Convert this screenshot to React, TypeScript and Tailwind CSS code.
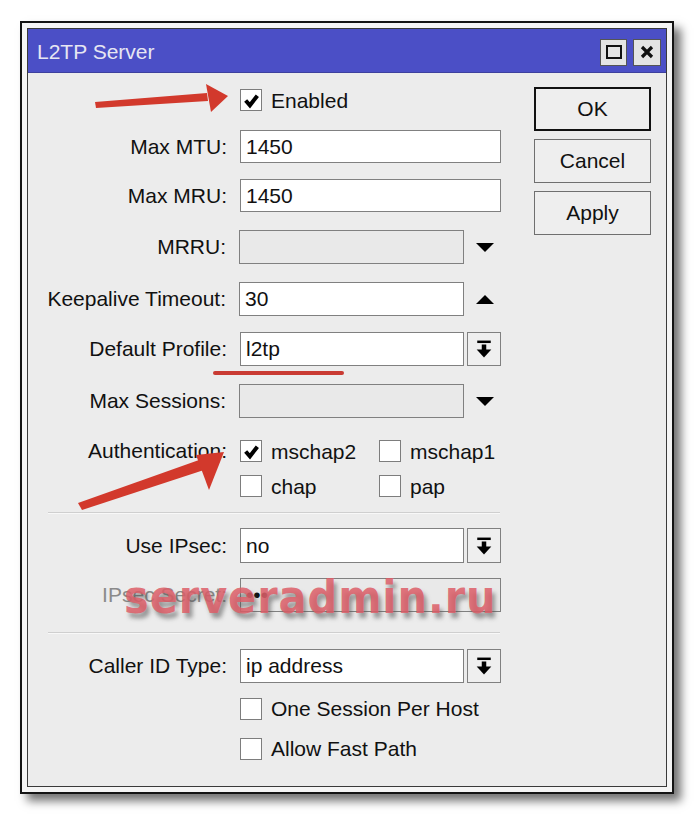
import React from "react";

const font = { fontFamily: '"Liberation Sans", Arial, sans-serif' };

const Check = ({ checked }: { checked?: boolean }) => (
  <div className="w-[22px] h-[22px] shrink-0 border border-[#7d7d7d] bg-white flex items-center justify-center">
    {checked && (
      <svg width="17" height="17" viewBox="0 0 16 16">
        <path d="M2.5 8 L6.5 12.5 L13.5 3.5" fill="none" stroke="#000" strokeWidth="3.8" />
      </svg>
    )}
  </div>
);

const DropIcon = () => (
  <svg width="16" height="18" viewBox="0 0 14 16">
    <rect x="1" y="0.5" width="12" height="2.2" fill="#000" />
    <rect x="5" y="4" width="4" height="5" fill="#000" />
    <polygon points="0.5,8.5 13.5,8.5 7,15.5" fill="#000" />
  </svg>
);

const Tri = ({ up }: { up?: boolean }) => (
  <div className="w-[37px] flex justify-end pr-[7px]">
    <svg width="18" height="9" viewBox="0 0 18 9">
      <polygon points={up ? "0,9 18,9 9,0" : "0,0 18,0 9,9"} fill="#000" />
    </svg>
  </div>
);

const Box = ({ value, w, disabled }: { value?: string; w: string; disabled?: boolean }) => (
  <div
    className={`${w} h-full border border-[#808080] flex items-center pl-[5px] text-[21px] text-[#111] ${
      disabled ? "bg-[#e9e9e9]" : "bg-white"
    }`}
  >
    {value}
  </div>
);

const Row = ({
  label,
  mt,
  h,
  dim,
  children,
}: {
  label?: string;
  mt: string;
  h: string;
  dim?: boolean;
  children: React.ReactNode;
}) => (
  <div className={`flex items-center ${mt} ${h}`}>
    <div className={`w-[200px] text-right text-[21px] pr-[1px] ${dim ? "text-[#8a8a8a]" : "text-[#111]"}`}>
      {label}
    </div>
    <div className="ml-[12px] h-full flex items-center">{children}</div>
  </div>
);

const Combo = ({ value }: { value: string }) => (
  <div className="flex h-full">
    <Box value={value} w="w-[224px]" />
    <div className="ml-[3px] w-[34px] h-full border border-[#808080] bg-[#efefef] flex items-center justify-center">
      <DropIcon />
    </div>
  </div>
);

const CheckItem = ({ checked, text, w }: { checked?: boolean; text: string; w?: string }) => (
  <div className={`flex items-center gap-[9px] ${w ?? ""}`}>
    <Check checked={checked} />
    <span className="text-[21px] text-[#111] leading-none">{text}</span>
  </div>
);

const Sep = ({ mt }: { mt: string }) => (
  <div className={`${mt} ml-[20px] w-[452px] h-[2px] border-t border-[#cfcfcf] bg-[#f8f8f8]`} />
);

const Btn = ({ text, primary, mt }: { text: string; primary?: boolean; mt?: string }) => (
  <div
    className={`w-[117px] h-[44px] flex items-center justify-center text-[21px] text-[#111] bg-[#eeeeee] ${
      primary ? "border-2 border-[#111]" : "border border-[#6f6f6f]"
    } ${mt ?? ""}`}
  >
    {text}
  </div>
);

export default function App() {
  return (
    <div className="relative w-[696px] h-[816px] bg-white overflow-hidden" style={font}>
      <div className="pt-[21px] pl-[20px]">
        {/* window */}
        <div className="w-[654px] h-[773px] border-2 border-[#141414] bg-[#f5f5f5] p-[5px] shadow-[7px_7px_9px_rgba(0,0,0,0.55)]">
          <div className="h-full border border-[#3a3a3a] bg-[#ececec] flex flex-col">
            {/* title bar */}
            <div className="h-[44px] bg-[#4b4fc6] flex items-center justify-between pl-[9px] pr-[5px] border-b border-[#3d409e]">
              <span className="text-[21px] text-[#e6e6f2] mt-[3px]">L2TP Server</span>
              <div className="flex gap-[6px] mt-[3px]">
                <div className="w-[27px] h-[27px] bg-[#e4e4e4] border border-[#555] flex items-center justify-center">
                  <div className="w-[16px] h-[14px] border-2 border-[#111]" />
                </div>
                <div className="w-[28px] h-[27px] bg-[#e4e4e4] border border-[#555] flex items-center justify-center">
                  <svg width="14" height="14" viewBox="0 0 14 14">
                    <path d="M2 2 L12 12 M12 2 L2 12" stroke="#111" strokeWidth="3.2" />
                  </svg>
                </div>
              </div>
            </div>

            {/* body */}
            <div className="flex">
              <div className="flex flex-col pt-[16px] w-[473px]">
                <Row mt="mt-0" h="h-[22px]">
                  <CheckItem checked text="Enabled" />
                </Row>
                <Row label="Max MTU:" mt="mt-[19px]" h="h-[33px]">
                  <Box value="1450" w="w-[261px]" />
                </Row>
                <Row label="Max MRU:" mt="mt-[16px]" h="h-[33px]">
                  <Box value="1450" w="w-[261px]" />
                </Row>
                <Row label="MRRU:" mt="mt-[18px]" h="h-[34px]">
                  <Box w="w-[225px]" disabled />
                  <Tri />
                </Row>
                <Row label="Keepalive Timeout:" mt="mt-[18px]" h="h-[34px]">
                  <Box value="30" w="w-[225px]" />
                  <Tri up />
                </Row>
                <Row label="Default Profile:" mt="mt-[16px]" h="h-[34px]">
                  <Combo value="l2tp" />
                </Row>
                <Row label="Max Sessions:" mt="mt-[18px]" h="h-[34px]">
                  <Box w="w-[225px]" disabled />
                  <Tri />
                </Row>
                <Row label="Authentication:" mt="mt-[22px]" h="h-[22px]">
                  <CheckItem checked text="mschap2" w="w-[139px]" />
                  <CheckItem text="mschap1" />
                </Row>
                <Row mt="mt-[13px]" h="h-[22px]">
                  <CheckItem text="chap" w="w-[139px]" />
                  <CheckItem text="pap" />
                </Row>
                <Sep mt="mt-[15px]" />
                <Row label="Use IPsec:" mt="mt-[14px]" h="h-[35px]">
                  <Combo value="no" />
                </Row>
                <Row label="IPsec Secret:" mt="mt-[15px]" h="h-[34px]" dim>
                  <Box value="•••" w="w-[261px]" disabled />
                </Row>
                <Sep mt="mt-[20px]" />
                <Row label="Caller ID Type:" mt="mt-[15px]" h="h-[34px]">
                  <Combo value="ip address" />
                </Row>
                <Row mt="mt-[14px]" h="h-[23px]">
                  <CheckItem text="One Session Per Host" />
                </Row>
                <Row mt="mt-[17px]" h="h-[23px]">
                  <CheckItem text="Allow Fast Path" />
                </Row>
              </div>

              {/* buttons */}
              <div className="ml-[33px] pt-[14px] flex flex-col">
                <Btn text="OK" primary />
                <Btn text="Cancel" mt="mt-[8px]" />
                <Btn text="Apply" mt="mt-[8px]" />
              </div>
            </div>
          </div>
        </div>
      </div>

      {/* red underline under l2tp */}
      <div className="absolute left-[213px] top-[371px] w-[131px] h-[4px] rounded-full bg-[#c93b33]" />

      {/* watermark */}
      <div
        className="absolute left-[124px] top-[563px] text-[46px] font-bold tracking-[1px] text-[#dd5e68]/85"
        style={{
          fontFamily: '"DejaVu Sans Condensed", "DejaVu Sans", sans-serif',
          textShadow: "3px 5px 4px rgba(80,80,80,0.55)",
        }}
      >
        serveradmin.ru
      </div>

      {/* arrows */}
      <svg className="absolute left-0 top-0" width="696" height="816" viewBox="0 0 696 816">
        <polygon points="95,102 207,93 208,101 96,108" fill="#d2392c" />
        <polygon points="228,96 206,84 211,112" fill="#d2392c" />
        <polygon points="78,503 199,460 204,470 82,510" fill="#d2392c" />
        <polygon points="224,452 196,455 209,490" fill="#d2392c" />
      </svg>
    </div>
  );
}
